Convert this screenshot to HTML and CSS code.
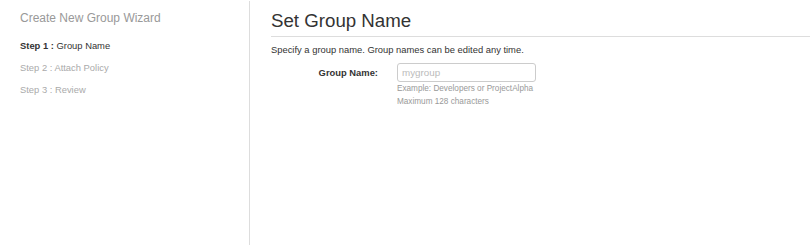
FILE: index.html
```html
<!DOCTYPE html>
<html lang="en">
<head>
    <meta charset="UTF-8">
    <title>Create New Group Wizard</title>
    <link rel="stylesheet" href="styles.css">
</head>
<body>
    <div class="wizard">
        <div class="sidebar">
            <h3>Create New Group Wizard</h3>
            <ul class="steps">
                <li class="active"><b>Step 1 :</b> Group Name</li>
                <li>Step 2 : Attach Policy</li>
                <li>Step 3 : Review</li>
            </ul>
        </div>
        <div class="content">
            <h2>Set Group Name</h2>
            <p class="intro">Specify a group name. Group names can be edited any time.</p>
            <div class="field">
                <label for="groupName">Group Name:</label>
                <div class="control">
                    <input type="text" id="groupName" placeholder="mygroup">
                    <div class="help">Example: Developers or ProjectAlpha</div>
                    <div class="help">Maximum 128 characters</div>
                </div>
            </div>
        </div>
    </div>
</body>
</html>
```

FILE: styles.css
```css
body {
    margin: 0;
    font-family: "Liberation Sans", Arial, sans-serif;
    color: #333;
    background: #fff;
}

.wizard {
    display: flex;
    height: 244px;
    padding-top: 1px;
}

.sidebar {
    width: 250px;
    padding: 9px 0 0 20px;
    box-sizing: border-box;
    border-right: 1px solid #ddd;
}

.sidebar h3 {
    margin: 0 0 13px;
    font-size: 12px;
    font-weight: normal;
    color: #999;
    line-height: 16px;
}

.steps {
    list-style: none;
    margin: 0;
    padding: 0;
}

.steps li {
    font-size: 9.4px;
    line-height: 13px;
    color: #aaa;
    margin-bottom: 9px;
}

.steps li.active {
    color: #333;
}

.content {
    flex: 1;
    padding: 8px 0 0 21px;
}

.content h2 {
    margin: 0;
    font-size: 18.7px;
    font-weight: normal;
    line-height: 24px;
    padding-bottom: 3px;
    border-bottom: 1px solid #ddd;
    color: #333;
}

.intro {
    margin: 6px 0 7px;
    font-size: 9.4px;
    line-height: 13px;
}

.field {
    display: flex;
    gap: 19px;
}

.field label {
    width: 107px;
    text-align: right;
    font-size: 9.4px;
    line-height: 13px;
    font-weight: bold;
    padding-top: 3px;
}

.field input {
    display: block;
    width: 139px;
    height: 19px;
    box-sizing: border-box;
    border: 1px solid #ccc;
    border-radius: 3px;
    padding: 0 4px;
    font-family: inherit;
    font-size: 9.8px;
    margin: 0;
}

.field input::placeholder {
    color: #bbb;
}

.help {
    font-size: 8.2px;
    line-height: 13px;
    color: #999;
}
```
